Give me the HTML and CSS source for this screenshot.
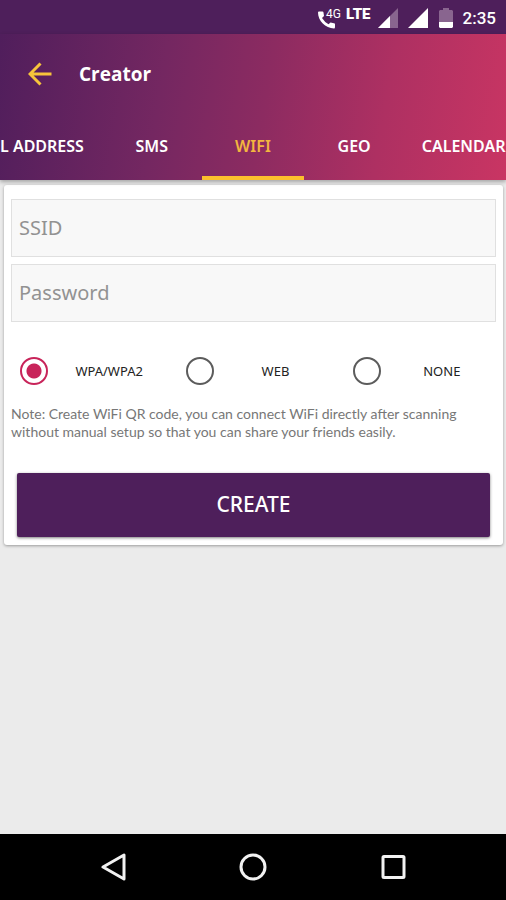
FILE: index.html
```html
<!DOCTYPE html>
<html lang="en">
<head>
<meta charset="utf-8">
<meta name="viewport" content="width=device-width, initial-scale=1">
<title>Creator</title>
<link rel="stylesheet" href="styles.css">
</head>
<body>
<div class="status">
  <svg class="call" width="24" height="24" viewBox="0 0 24 24" aria-hidden="true">
    <path d="M0 6.500Q0 5.500 1 5.500H4.500Q5.300 5.500 5.500 6.500L6 10L4 12Q6.500 16 10.500 18.200L12.500 16.500L16 17.200Q17 17.400 17 18.200V21Q17 22.500 16 22.500C7.500 22 0 15 0 6.500Z" fill="#fff"/>
    <text x="8" y="12">4G</text>
  </svg>
  <span class="lte">LTE</span>
  <svg class="signal" width="20" height="20" viewBox="0 0 20 20" aria-hidden="true">
    <path d="M0 20L20 0V20Z" fill="#89658f"/>
    <path d="M0 20L12 8V20Z" fill="#fff"/>
  </svg>
  <svg class="signal" width="20" height="20" viewBox="0 0 20 20" aria-hidden="true"><path d="M0 20L20 0V20Z" fill="#fff"/></svg>
  <svg class="battery" width="14" height="20" viewBox="0 0 14 20" aria-hidden="true">
    <path d="M1 2H4V0H10V2H13L14 3V14H0V3Z" fill="#89658f"/>
    <path d="M0 14H14V19L13 20H1L0 19Z" fill="#fff"/>
  </svg>
  <time class="clock">2:35</time>
</div>
<header class="header">
  <div class="bar">
    <button class="back" type="button" aria-label="Back">
      <svg width="24" height="24" viewBox="0 0 24 24"><path d="M23.500 12H2.500M12.500 1.500L2 12L12.500 22.500" fill="none" stroke="#f7c43b" stroke-width="3"/></svg>
    </button>
    <h1 class="title">Creator</h1>
  </div>
  <nav class="tabs">
    <a class="tab tab-first" href="#address">L ADDRESS</a>
    <a class="tab" href="#sms">SMS</a>
    <a class="tab tab-active" href="#wifi" aria-current="page">WIFI</a>
    <a class="tab" href="#geo">GEO</a>
    <a class="tab tab-last" href="#calendar">CALENDAR</a>
  </nav>
</header>
<main class="main">
  <form class="card">
    <div class="fields">
      <input class="field" type="text" placeholder="SSID" aria-label="SSID">
      <input class="field" type="password" placeholder="Password" aria-label="Password">
    </div>
    <div class="options">
      <label class="option"><input class="radio" type="radio" name="security" checked><span class="option-name">WPA/WPA2</span></label>
      <label class="option"><input class="radio" type="radio" name="security"><span class="option-name">WEB</span></label>
      <label class="option"><input class="radio" type="radio" name="security"><span class="option-name">NONE</span></label>
    </div>
    <p class="note">Note: Create WiFi QR code, you can connect WiFi directly after scanning without manual setup so that you can share your friends easily.</p>
    <button class="create" type="button">CREATE</button>
  </form>
</main>
<footer class="system">
  <button class="key" type="button" aria-label="Back"><svg width="28" height="28" viewBox="0 0 28 28"><path d="M25 2V26L4 14Z"/></svg></button>
  <button class="key" type="button" aria-label="Home"><svg width="28" height="28" viewBox="0 0 28 28"><circle cx="14" cy="14" r="12"/></svg></button>
  <button class="key" type="button" aria-label="Recent apps"><svg width="28" height="28" viewBox="0 0 28 28"><rect x="4" y="3.500" width="21" height="21" rx="1"/></svg></button>
</footer>
</body>
</html>
```
FILE: styles.css
```css
* {
  box-sizing: border-box;
}

body {
  margin: 0;
  min-height: 100vh;
  display: flex;
  flex-direction: column;
  background: #ebebeb;
  font-family: "Noto Sans", sans-serif;
}

button {
  border: 0;
  padding: 0;
  background: none;
  font-family: inherit;
}

svg {
  display: block;
}

.status {
  height: 34px;
  padding: 2px 10px 0;
  display: flex;
  justify-content: flex-end;
  align-items: center;
  background: #4e1f5b;
  color: #fff;
  font-family: Roboto, sans-serif;
}

.call text {
  fill: #fff;
  font-size: 12px;
}

.lte {
  margin: 0 7px 8px 4px;
  font-size: 15px;
  line-height: 18px;
  font-weight: 900;
}

.signal {
  margin-right: 10px;
}

.battery {
  margin: 0 10px 0 1px;
}

.clock {
  font-size: 17px;
  font-weight: 500;
}

.header {
  position: relative;
  background: linear-gradient(100deg, #501e5c 0%, #742761 32%, #8c2b61 52%, #ae3062 75%, #c93563 100%);
  box-shadow: 0 2px 4px rgba(0, 0, 0, 0.3);
  color: #fff;
}

.bar {
  height: 79px;
  padding: 0 28px;
  display: flex;
  align-items: center;
  gap: 27px;
}

.title {
  margin: 0;
  font-size: 19px;
  line-height: 28px;
  font-family: "Open Sans", sans-serif;
  font-weight: 700;
}

.tabs {
  display: grid;
  grid-template-columns: repeat(5, 20%);
  overflow: hidden;
}

.tab {
  height: 67px;
  padding-top: 4px;
  border-bottom: 4px solid transparent;
  color: inherit;
  font-size: 16px;
  line-height: 58px;
  font-weight: 600;
  text-align: center;
  text-decoration: none;
  white-space: nowrap;
}

.tab-first {
  text-align: left;
}

.tab-active {
  border-color: #fbc02d;
  color: #f3b63f;
}

.tab-last {
  padding-left: 17px;
  text-align: left;
}

.main {
  flex: 1;
  padding: 5px 3px 5px 4px;
}

.card {
  padding-top: 14px;
  padding-bottom: 8px;
  border-radius: 3px;
  background: #fff;
  box-shadow: 0 1px 3px rgba(0, 0, 0, 0.35);
}

.fields {
  padding: 0 7px;
  display: grid;
  gap: 7px;
}

.field {
  width: 100%;
  height: 58px;
  padding: 0 7px 2px;
  border: 1px solid #e0e0e0;
  border-radius: 0;
  background: #f8f8f8;
  font-family: inherit;
  font-size: 20px;
}

.field::placeholder {
  color: #929292;
  opacity: 1;
}

.options {
  margin-top: 35px;
  display: grid;
  grid-template-columns: repeat(3, 1fr);
}

.option {
  padding-left: 16px;
  display: flex;
  align-items: center;
}

.radio {
  width: 28px;
  height: 28px;
  margin: 0;
  appearance: none;
  border: 2px solid #5c5c5c;
  border-radius: 50%;
}

.radio:checked {
  border-color: #c8245a;
  background: radial-gradient(circle, #c8245a 0 7px, transparent 8px);
}

.option-name {
  flex: 1;
  color: #222;
  font-size: 13px;
  text-align: center;
}

.note {
  margin: 20px 7px 32px;
  color: #777;
  font-family: Lato, sans-serif;
  font-size: 14px;
  line-height: 18px;
}

.create {
  display: block;
  width: calc(100% - 26px);
  height: 64px;
  margin: 0 13px;
  padding-bottom: 3px;
  border-radius: 2px;
  background: #4e1f5b;
  box-shadow: 0 1px 3px rgba(0, 0, 0, 0.5);
  color: #fff;
  font-size: 21px;
  font-weight: 500;
}

.system {
  height: 66px;
  display: flex;
  justify-content: center;
  align-items: center;
  gap: 112px;
  background: #000;
}

.key svg {
  fill: none;
  stroke: #f2f2f2;
  stroke-width: 3;
  stroke-linejoin: round;
}
```
